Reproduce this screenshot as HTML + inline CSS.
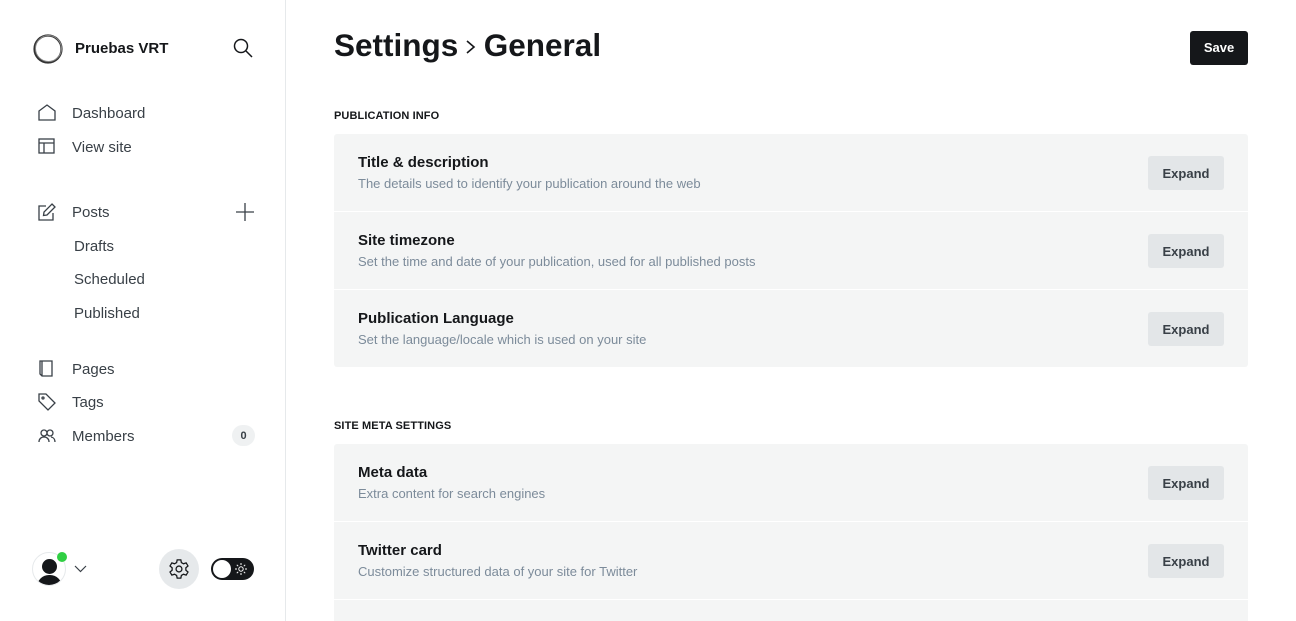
<!DOCTYPE html>
<html style="height:621px;overflow:hidden"><head><meta charset="utf-8"><style>
*{box-sizing:border-box;margin:0;padding:0}
html,body{overflow:hidden}
body{width:1296px;height:621px;overflow:hidden;background:#fff;font-family:"Liberation Sans","DejaVu Sans",sans-serif;color:#15171a;position:relative}
.side{position:absolute;left:0;top:0;width:286px;height:621px;border-right:1px solid #e6e9eb}
.abs{position:absolute}
.nav{position:absolute;left:72px;font-size:15px;color:#394047}
.sub{position:absolute;left:74px;font-size:15px;color:#394047}
.ic{position:absolute;left:38px}
h1{position:absolute;left:334px;top:27px;font-size:31.5px;font-weight:700;letter-spacing:0;white-space:nowrap;word-spacing:-2px}
.save{position:absolute;left:1190px;top:31px;width:58px;height:34px;background:#15171a;color:#fff;border-radius:3px;font-size:13px;font-weight:700;text-align:center;line-height:34px}
.sh{position:absolute;left:334px;font-size:11px;font-weight:700;letter-spacing:0.1px}
.row{position:absolute;left:334px;width:914px;height:77px;background:#f4f5f5}
.row .t{position:absolute;left:24px;top:20px;font-size:15px;font-weight:700}
.row .d{position:absolute;left:24px;top:42px;font-size:13px;color:#7c8b9a}
.row .b{position:absolute;left:814px;top:22px;width:76px;height:34px;background:#e3e6e8;border-radius:3px;font-size:13px;font-weight:700;color:#394047;text-align:center;line-height:35px}
</style></head><body>
<div class="side">
<svg class="abs" style="left:32px;top:33px" width="32" height="32" viewBox="0 0 32 32"><circle cx="16" cy="16" r="13.5" fill="none" stroke="#333" stroke-width="2.2"/><circle cx="16.5" cy="15.5" r="13" fill="none" stroke="#888" stroke-width="1"/></svg>
<div class="abs" style="left:75px;top:40px;font-size:15px;font-weight:700">Pruebas VRT</div>
<svg class="abs" style="left:233px;top:38px" width="20" height="20" viewBox="0 0 20 20" fill="none" stroke="#15171a" stroke-width="1.5"><circle cx="8" cy="8" r="6.5"/><path d="M13 13l6 6"/></svg>

<svg class="ic" style="top:104px" width="18" height="17" viewBox="0 0 18 17" fill="none" stroke="#394047" stroke-width="1.3"><path d="M1 7L9 1l8 6v9H1z"/></svg>
<div class="nav" style="top:105px">Dashboard</div>
<svg class="ic" style="top:138px" width="17" height="16" viewBox="0 0 17 16" fill="none" stroke="#394047" stroke-width="1.3"><rect x="1" y="1" width="15" height="14"/><path d="M1 5h15M6 5v10"/></svg>
<div class="nav" style="top:139px">View site</div>
<svg class="ic" style="top:203px" width="18" height="18" viewBox="0 0 18 18" fill="none" stroke="#394047" stroke-width="1.3"><path d="M8 3H1v14h14v-7"/><path d="M14 1l3 3-8 8-3.5.5L6 9z"/></svg>
<div class="nav" style="top:204px">Posts</div>
<svg class="abs" style="left:235px;top:202px" width="20" height="20" viewBox="0 0 20 20" stroke="#394047" stroke-width="1.3"><path d="M10 1v18M1 10h18"/></svg>
<div class="sub" style="top:238px">Drafts</div>
<div class="sub" style="top:271px">Scheduled</div>
<div class="sub" style="top:305px">Published</div>
<svg class="ic" style="top:360px" width="16" height="17" viewBox="0 0 16 17" fill="none" stroke="#394047" stroke-width="1.3"><path d="M2 1h12v15H4l-2-2zM4 1v15"/></svg>
<div class="nav" style="top:361px">Pages</div>
<svg class="ic" style="top:393px" width="18" height="18" viewBox="0 0 18 18" fill="none" stroke="#394047" stroke-width="1.3"><path d="M1 1h7l9 9-7 7-9-9z"/><circle cx="5" cy="5" r="1"/></svg>
<div class="nav" style="top:394px">Tags</div>
<svg class="ic" style="top:429px" width="18" height="14" viewBox="0 0 18 14" fill="none" stroke="#394047" stroke-width="1.3"><circle cx="6" cy="4" r="3"/><path d="M1 13c0-3 2-5 5-5s5 2 5 5"/><circle cx="12" cy="4" r="3"/><path d="M13 8c2.5.3 4 2.3 4 5"/></svg>
<div class="nav" style="top:428px">Members</div>
<div class="abs" style="left:232px;top:425px;width:23px;height:21px;border-radius:11px;background:#eff1f2;font-size:11px;font-weight:700;text-align:center;line-height:22px;color:#394047">0</div>

<div class="abs" style="left:32px;top:552px;width:34px;height:34px;border-radius:50%;border:1px solid #e6e9eb;overflow:hidden;background:#fff">
<div class="abs" style="left:9px;top:6px;width:15px;height:15px;border-radius:50%;background:#15171a"></div>
<div class="abs" style="left:4px;top:22px;width:25px;height:16px;border-radius:12px 12px 0 0;background:#15171a"></div></div>
<div class="abs" style="left:57px;top:552px;width:10px;height:10px;border-radius:50%;background:#30cf43"></div>
<svg class="abs" style="left:74px;top:565px" width="13" height="8" viewBox="0 0 13 8" fill="none" stroke="#394047" stroke-width="1.2"><path d="M1 1l5.5 5.5L12 1"/></svg>
<div class="abs" style="left:159px;top:549px;width:40px;height:40px;border-radius:50%;background:#e6e9eb"></div>
<svg class="abs" style="left:168px;top:558px" width="22" height="22" viewBox="0 0 24 24" fill="none" stroke="#15171a" stroke-width="1.4"><path d="M10 2h4l.6 3 2.3 1.3 2.9-1 2 3.4-2.3 2v2.6l2.3 2-2 3.4-2.9-1-2.3 1.3-.6 3h-4l-.6-3-2.3-1.3-2.9 1-2-3.4 2.3-2v-2.6l-2.3-2 2-3.4 2.9 1L9.4 5z"/><circle cx="12" cy="12" r="3.2"/></svg>
<div class="abs" style="left:211px;top:558px;width:43px;height:22px;border-radius:11px;background:#15171a"></div>
<div class="abs" style="left:213px;top:560px;width:18px;height:18px;border-radius:50%;background:#fff"></div>
<svg class="abs" style="left:235px;top:563px" width="12" height="12" viewBox="0 0 12 12" stroke="#fff" stroke-width="1"><circle cx="6" cy="6" r="2.2" fill="none"/><path d="M6 0v2M6 10v2M0 6h2M10 6h2M1.8 1.8l1.4 1.4M8.8 8.8l1.4 1.4M1.8 10.2l1.4-1.4M8.8 3.2l1.4-1.4"/></svg>
</div>

<h1>Settings <svg width="12" height="18" viewBox="0 0 12 18" fill="none" stroke="#15171a" stroke-width="1.6"><path d="M2 3l7 6-7 6"/></svg> General</h1>
<div class="save">Save</div>

<div class="sh" style="top:110px">PUBLICATION INFO</div>
<div class="row" style="top:134px;border-radius:3px 3px 0 0"><div class="t">Title &amp; description</div><div class="d">The details used to identify your publication around the web</div><div class="b">Expand</div></div>
<div class="row" style="top:212px"><div class="t">Site timezone</div><div class="d">Set the time and date of your publication, used for all published posts</div><div class="b">Expand</div></div>
<div class="row" style="top:290px;border-radius:0 0 3px 3px"><div class="t">Publication Language</div><div class="d">Set the language/locale which is used on your site</div><div class="b">Expand</div></div>

<div class="sh" style="top:420px">SITE META SETTINGS</div>
<div class="row" style="top:444px;border-radius:3px 3px 0 0"><div class="t">Meta data</div><div class="d">Extra content for search engines</div><div class="b">Expand</div></div>
<div class="row" style="top:522px"><div class="t">Twitter card</div><div class="d">Customize structured data of your site for Twitter</div><div class="b">Expand</div></div>
<div class="row" style="top:600px;height:21px"></div>
</body></html>
